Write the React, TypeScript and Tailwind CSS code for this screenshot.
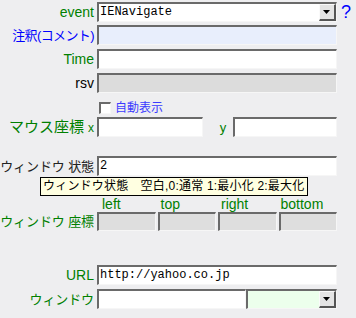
import React from "react";

const sunken =
  "border-t-2 border-l-2 border-r border-b border-t-[#6a6a6a] border-l-[#6a6a6a] border-r-[#f6f6f6] border-b-[#f6f6f6]";
const mono = { fontFamily: '"Liberation Mono", "Noto Sans CJK JP", monospace' };
const ui = { fontFamily: '"Liberation Sans", "Noto Sans CJK JP", sans-serif' };

function DropBtn() {
  return (
    <div className="absolute right-0 top-0 bottom-0 w-[17px] bg-[#e4e4e4] border-t border-l border-t-[#fafafa] border-l-[#fafafa] border-b-2 border-r-2 border-b-[#555] border-r-[#555] flex items-center justify-center">
      <svg width="8" height="5" viewBox="0 0 8 5">
        <path d="M0 0 H7 L3.5 4 Z" fill="#000" />
      </svg>
    </div>
  );
}

function Label({ children, className = "", style = {} }: { children: React.ReactNode; className?: string; style?: React.CSSProperties }) {
  return (
    <div
      className={"w-[97px] shrink-0 pr-[3px] text-right whitespace-nowrap leading-none " + className}
      style={{ ...ui, ...style }}
    >
      {children}
    </div>
  );
}

export default function App() {
  return (
    <div className="w-[356px] h-[318px] bg-[#eeeef0] overflow-hidden relative" style={ui}>
      <div className="flex flex-col">
        {/* event */}
        <div className="flex items-center h-[20px] mt-[2px]">
          <Label className="text-[14px] text-[#008000]">event</Label>
          <div className={"relative w-[240px] h-[20px] bg-white " + sunken}>
            <div className="pl-[1px] text-[12px] leading-[16px] text-black" style={mono}>IENavigate</div>
            <DropBtn />
          </div>
          <div className="ml-[4px] text-[18px] leading-none text-[#0000ff]" style={ui}>?</div>
        </div>
        {/* 注釈 */}
        <div className="flex items-center h-[20px] mt-[3px]">
          <Label className="text-[13px] text-[#0000ff] tracking-[-0.6px]">注釈(コメント)</Label>
          <div className={"w-[240px] h-[20px] bg-[#e8eefc] " + sunken} />
        </div>
        {/* Time */}
        <div className="flex items-center h-[20px] mt-[4px]">
          <Label className="text-[14px] text-[#008000]">Time</Label>
          <div className={"w-[240px] h-[20px] bg-white " + sunken} />
        </div>
        {/* rsv */}
        <div className="flex items-center h-[20px] mt-[4px]">
          <Label className="text-[14px] text-black">rsv</Label>
          <div className={"w-[240px] h-[20px] bg-[#dcdcdc] " + sunken} />
        </div>
        {/* checkbox */}
        <div className="flex items-end h-[15px] mt-[6px]">
          <div className="w-[99px] shrink-0" />
          <div className={"w-[12px] h-[12px] bg-white " + sunken} />
          <div className="ml-[4px] text-[12px] leading-none text-[#3c3cff]">自動表示</div>
        </div>
        {/* mouse */}
        <div className="flex items-center h-[20px] mt-[3px]">
          <Label className="text-[#008000]">
            <span className="text-[15px]">マウス座標</span>
            <span className="text-[12px] ml-[4px]">x</span>
          </Label>
          <div className={"w-[106px] h-[20px] bg-white " + sunken} />
          <div className="w-[30px] text-[13px] text-[#008000] text-center pl-[10px] leading-none">y</div>
          <div className={"w-[104px] h-[20px] bg-white " + sunken} />
        </div>
        {/* state */}
        <div className="relative flex items-center h-[20px] mt-[19px]">
          <Label className="text-[13px] text-[#222] tracking-[-0.1px]">ウィンドウ 状態</Label>
          <div className={"w-[240px] h-[20px] bg-white " + sunken}>
            <div className="pl-[1px] text-[12px] leading-[16px] text-black" style={mono}>2</div>
          </div>
          <div className="absolute left-[40px] top-[21px] w-[268px] h-[19px] bg-[#ffffe1] border border-black pl-[2px] text-[12px] tracking-[0.2px] leading-[17px] text-black whitespace-nowrap z-10">
            ウィンドウ状態　空白,0:通常 1:最小化 2:最大化
          </div>
        </div>
        {/* coord labels */}
        <div className="flex items-end h-[15px] mt-[20px]">
          <div className="w-[97px] shrink-0" />
          <div className="grid grid-cols-4 gap-[2px] w-[240px] text-[14px] leading-none text-[#008000]">
            <div className="pl-[5px]">left</div>
            <div className="pl-[3px]">top</div>
            <div className="pl-[3px]">right</div>
            <div className="pl-[2px]">bottom</div>
          </div>
        </div>
        {/* coords */}
        <div className="flex items-center h-[19px] mt-[1px]">
          <Label className="text-[13px] text-[#008000] tracking-[-0.1px]">ウィンドウ 座標</Label>
          <div className="grid grid-cols-4 gap-[2px] w-[240px]">
            <div className={"h-[19px] bg-[#dedede] " + sunken} />
            <div className={"h-[19px] bg-[#dedede] " + sunken} />
            <div className={"h-[19px] bg-[#dedede] " + sunken} />
            <div className={"h-[19px] bg-[#dedede] " + sunken} />
          </div>
        </div>
        {/* URL */}
        <div className="flex items-center h-[20px] mt-[34px]">
          <Label className="text-[14px] text-[#008000]">URL</Label>
          <div className={"w-[240px] h-[20px] bg-white " + sunken}>
            <div className="pl-[1px] text-[12px] leading-[16px] text-black" style={mono}>http://yahoo.co.jp</div>
          </div>
        </div>
        {/* window */}
        <div className="flex items-center h-[20px] mt-[4px]">
          <Label className="text-[13px] text-[#008000] tracking-[-0.1px]">ウィンドウ</Label>
          <div className={"w-[149px] h-[20px] bg-white " + sunken} />
          <div className={"relative w-[91px] h-[20px] bg-[#ecffec] " + sunken}>
            <DropBtn />
          </div>
        </div>
      </div>
    </div>
  );
}
